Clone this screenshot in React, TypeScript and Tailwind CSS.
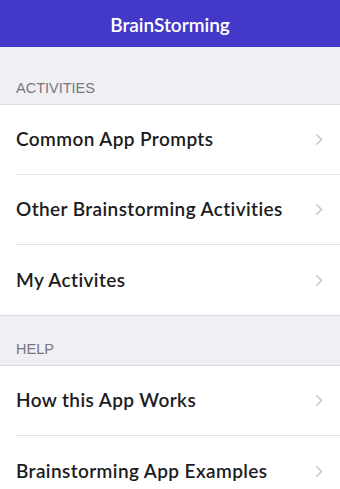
import React from "react";

const font = { fontFamily: "Lato, 'Open Sans', sans-serif" };

function Chevron() {
  return (
    <svg width="8" height="13" viewBox="0 0 8 13" className="shrink-0">
      <path d="M1.5 1.5 L6.5 6.5 L1.5 11.5" fill="none" stroke="#c7c7cc" strokeWidth="1.6" />
    </svg>
  );
}

function Row({ label, last }: { label: string; last?: boolean }) {
  return (
    <div className="pl-4 bg-white">
      <div
        className={
          "h-[70px] flex items-center justify-between pr-[17px] " +
          (last ? "" : "border-b border-[#e2e2e6]")
        }
      >
        <span className="text-[19px] font-semibold tracking-[0.4px] text-[#1c1c1e]">{label}</span>
        <Chevron />
      </div>
    </div>
  );
}

function Section({ title, h }: { title: string; h: string }) {
  return (
    <div className={"bg-[#efeff4] flex items-end px-4 pb-[4px] border-b border-[#dcdce0] " + h}>
      <span
        className="text-[14.5px] text-[#77777c]"
        style={{ fontFamily: "'Liberation Sans', Arial, sans-serif" }}
      >
        {title}
      </span>
    </div>
  );
}

export default function App() {
  return (
    <div className="w-[340px] h-[489px] overflow-hidden bg-[#efeff4]" style={font}>
      <div className="h-[47px] bg-[#4438c9] flex items-center justify-center pt-[3px]">
        <span className="text-white text-[19px] font-semibold">BrainStorming</span>
      </div>
      <Section title="ACTIVITIES" h="h-[58px]" />
      <Row label="Common App Prompts" />
      <Row label="Other Brainstorming Activities" />
      <Row label="My Activites" last />
      <div className="border-t border-[#dcdce0]" />
      <Section title="HELP" h="h-[50px]" />
      <Row label="How this App Works" />
      <Row label="Brainstorming App Examples" last />
    </div>
  );
}
